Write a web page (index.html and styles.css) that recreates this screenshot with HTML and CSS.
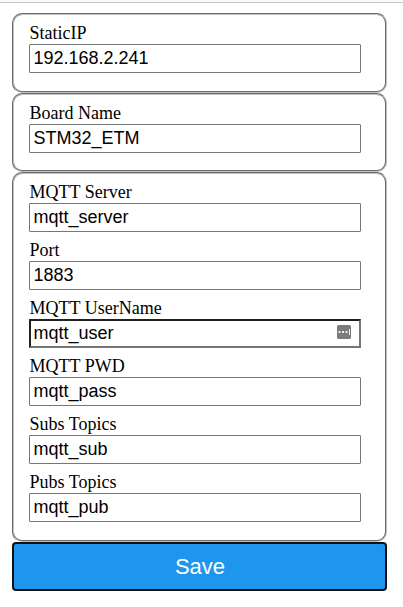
FILE: index.html
```
<!DOCTYPE html>
<html lang="en">
<head>
<meta charset="utf-8">
<title>Settings</title>
<link rel="stylesheet" href="styles.css">
</head>
<body>
<form class="settings">
  <section class="group">
    <label class="field"><span class="label">StaticIP</span><input class="input" type="text" value="192.168.2.241"></label>
  </section>
  <section class="group">
    <label class="field"><span class="label">Board Name</span><input class="input" type="text" value="STM32_ETM"></label>
  </section>
  <section class="group">
    <label class="field"><span class="label">MQTT Server</span><input class="input" type="text" value="mqtt_server"></label>
    <label class="field"><span class="label">Port</span><input class="input" type="text" value="1883"></label>
    <label class="field"><span class="label">MQTT UserName</span><input class="input inset" type="text" value="mqtt_user">
      <svg class="manager" viewBox="0 0 14 14"><rect width="14" height="14" rx="1.500" fill="#7b7b7b"/><path d="M1.500 6h2v2h-2zM5 6h2v2H5zM8.500 6h2v2h-2zM12 4h1v6h-1z" fill="#eee"/></svg>
    </label>
    <label class="field"><span class="label">MQTT PWD</span><input class="input" type="text" value="mqtt_pass"></label>
    <label class="field"><span class="label">Subs Topics</span><input class="input" type="text" value="mqtt_sub"></label>
    <label class="field"><span class="label">Pubs Topics</span><input class="input" type="text" value="mqtt_pub"></label>
  </section>
  <button class="save" type="button">Save</button>
</form>
</body>
</html>
```
FILE: styles.css
```
* { box-sizing: border-box; }
body {
  margin: 0;
  border-top: 2px solid #f8f8f8;
  background: #fff;
  color: #000;
  font: 18px/20px "Liberation Serif", serif;
}
.settings {
  border-top: 1px solid #c4c4c4;
  padding: 10px 16px 0 12px;
}
.group {
  border: 2px groove #c0c0c0;
  border-radius: 10px;
  padding: 8px 24px 7px 15px;
}
.group:nth-of-type(1) { height: 80px; }
.group:nth-of-type(2) { height: 79px; }
.group:nth-of-type(3) { height: 370px; }
.field {
  display: block;
  position: relative;
  height: 58px;
}
.label { display: block; height: 21px; padding-left: 0.5px; }
.input {
  display: block;
  width: 332px;
  height: 29px;
  margin: 0;
  padding: 0 4px 0 3.5px;
  border: 1px solid #767676;
  border-radius: 1px;
  background: #fff;
  color: #000;
  font: 18px "Liberation Sans", sans-serif;
}
.inset { border: 2px inset #767676; border-radius: 0; padding: 0 3px 0 2.5px; }
.manager {
  position: absolute;
  top: 27px;
  left: 308px;
  width: 14px;
  height: 14px;
}
.save {
  display: block;
  width: 375px;
  height: 49px;
  padding: 0 0 0 1px;
  border: 2px solid #101010;
  border-radius: 4px;
  background: #1f96ed;
  color: #fff;
  font: 22px "Liberation Sans", sans-serif;
}
```
